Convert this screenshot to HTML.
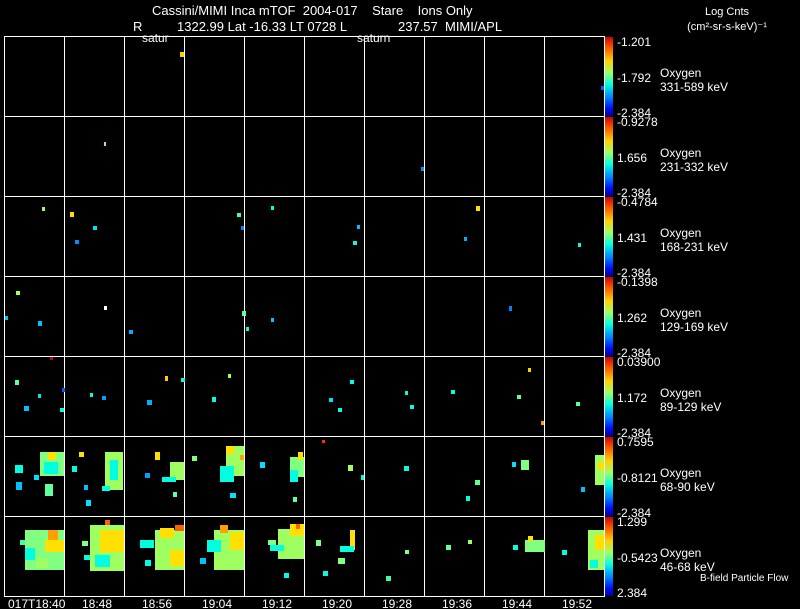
<!DOCTYPE html>
<html><head><meta charset="utf-8"><style>
html,body{margin:0;padding:0;background:#000;width:800px;height:609px;overflow:hidden}
svg{display:block}
text{font-family:"Liberation Sans",sans-serif;fill:#fff;white-space:pre}
</style></head><body>
<svg width="800" height="609" viewBox="0 0 800 609" xmlns="http://www.w3.org/2000/svg" xml:space="preserve">
<defs>
<linearGradient id="cb" x1="0" y1="0" x2="0" y2="1">
<stop offset="0" stop-color="#d00000"/>
<stop offset="0.15" stop-color="#ff6000"/>
<stop offset="0.3" stop-color="#ffd000"/>
<stop offset="0.45" stop-color="#a0ff60"/>
<stop offset="0.6" stop-color="#00ffe0"/>
<stop offset="0.75" stop-color="#0090ff"/>
<stop offset="0.9" stop-color="#0010ff"/>
<stop offset="1" stop-color="#0000a0"/>
</linearGradient>
</defs>
<rect width="800" height="609" fill="#000"/>
<text x="152" y="15" font-size="13">Cassini/MIMI Inca mTOF  2004-017    Stare    Ions Only</text>
<text x="133" y="31" font-size="13">R</text>
<text x="177" y="31" font-size="13">1322.99 Lat -16.33 LT 0728 L</text>
<text x="398" y="31" font-size="13">237.57  MIMI/APL</text>
<text x="142" y="42" font-size="12">satur</text>
<text x="357" y="42" font-size="12">saturn</text>
<text x="727" y="15" font-size="11" text-anchor="middle">Log Cnts</text>
<text x="727" y="30" font-size="11" text-anchor="middle">(cm²-sr-s-keV)⁻¹</text>

<g fill="url(#cb)">
<rect x="605" y="37" width="8" height="79"/><rect x="605" y="117" width="8" height="79"/><rect x="605" y="197" width="8" height="79"/><rect x="605" y="277" width="8" height="79"/><rect x="605" y="357" width="8" height="79"/><rect x="605" y="437" width="8" height="79"/><rect x="605" y="517" width="8" height="79"/>
</g>

<g stroke="#fff" stroke-width="1" fill="none">
<rect x="4.5" y="36.5" width="600" height="560"/>
<path d="M4 116.5H605M4 196.5H605M4 276.5H605M4 356.5H605M4 436.5H605M4 516.5H605"/>
<path d="M64.5 36V596M124.5 36V596M184.5 36V596M244.5 36V596M304.5 36V596M364.5 36V596M424.5 36V596M484.5 36V596M544.5 36V596"/>
</g>

<g font-size="12">
<text x="617" y="46">-1.201</text><text x="617" y="82">-1.792</text><text x="617" y="117">-2.384</text>
<text x="617" y="126">-0.9278</text><text x="617" y="162">1.656</text><text x="617" y="197">-2.384</text>
<text x="617" y="206">-0.4784</text><text x="617" y="242">1.431</text><text x="617" y="277">-2.384</text>
<text x="617" y="286">-0.1398</text><text x="617" y="322">1.262</text><text x="617" y="357">-2.384</text>
<text x="617" y="366">0.03900</text><text x="617" y="402">1.172</text><text x="617" y="437">-2.384</text>
<text x="617" y="446">0.7595</text><text x="617" y="482">-0.8121</text><text x="617" y="517">-2.384</text>
<text x="617" y="526">1.299</text><text x="617" y="562">-0.5423</text><text x="617" y="597">2.384</text>
</g>
<g font-size="12">
<text x="660" y="77">Oxygen</text><text x="660" y="91">331-589 keV</text>
<text x="660" y="157">Oxygen</text><text x="660" y="171">231-332 keV</text>
<text x="660" y="237">Oxygen</text><text x="660" y="251">168-231 keV</text>
<text x="660" y="317">Oxygen</text><text x="660" y="331">129-169 keV</text>
<text x="660" y="397">Oxygen</text><text x="660" y="411">89-129 keV</text>
<text x="660" y="477">Oxygen</text><text x="660" y="491">68-90 keV</text>
<text x="660" y="557">Oxygen</text><text x="660" y="571">46-68 keV</text>
</g>
<text x="700" y="581" font-size="10">B-field Particle Flow</text>
<g font-size="12">
<text x="8" y="608">017T18:40</text><text x="82" y="608">18:48</text><text x="142" y="608">18:56</text><text x="202" y="608">19:04</text><text x="262" y="608">19:12</text><text x="322" y="608">19:20</text><text x="382" y="608">19:28</text><text x="442" y="608">19:36</text><text x="502" y="608">19:44</text><text x="562" y="608">19:52</text>
</g>

<g>
<rect x="180" y="52" width="4" height="5" fill="#ffd000"/><rect x="601" y="86" width="3" height="4" fill="#0060ff"/>
<rect x="104" y="142" width="2" height="4" fill="#80ff80"/><rect x="421" y="167" width="3" height="4" fill="#0090ff"/>
<rect x="42" y="207" width="3" height="4" fill="#a0ff60"/><rect x="70" y="212" width="4" height="5" fill="#ffe000"/><rect x="93" y="226" width="4" height="4" fill="#00e0ff"/><rect x="75" y="240" width="4" height="4" fill="#0090ff"/><rect x="237" y="213" width="4" height="4" fill="#40ffa0"/><rect x="241" y="226" width="3" height="4" fill="#0080ff"/><rect x="271" y="206" width="3" height="4" fill="#00ffe0"/><rect x="357" y="225" width="3" height="4" fill="#00c0ff"/><rect x="353" y="241" width="4" height="4" fill="#00ffe0"/><rect x="476" y="206" width="4" height="5" fill="#ffe000"/><rect x="464" y="237" width="3" height="4" fill="#00b0ff"/><rect x="578" y="243" width="3" height="4" fill="#00ffe0"/>
<rect x="16" y="291" width="4" height="4" fill="#a0ff60"/><rect x="5" y="316" width="3" height="4" fill="#00c0ff"/><rect x="38" y="321" width="4" height="5" fill="#00c0ff"/><rect x="104" y="306" width="3" height="4" fill="#ffffff"/><rect x="129" y="330" width="4" height="4" fill="#00b0ff"/><rect x="242" y="311" width="4" height="5" fill="#60ffa0"/><rect x="246" y="327" width="3" height="4" fill="#00ffe0"/><rect x="271" y="318" width="3" height="4" fill="#00c0ff"/><rect x="509" y="306" width="3" height="5" fill="#0080ff"/>
<rect x="15" y="380" width="4" height="5" fill="#60ffa0"/><rect x="24" y="406" width="5" height="5" fill="#00c0ff"/><rect x="38" y="394" width="3" height="4" fill="#00e0ff"/><rect x="62" y="388" width="3" height="4" fill="#0060ff"/><rect x="60" y="408" width="4" height="4" fill="#00ffe0"/><rect x="90" y="393" width="3" height="4" fill="#00ffe0"/><rect x="102" y="396" width="4" height="4" fill="#00a0ff"/><rect x="147" y="400" width="5" height="5" fill="#00b0ff"/><rect x="165" y="376" width="3" height="5" fill="#ffd000"/><rect x="181" y="378" width="4" height="4" fill="#00ffe0"/><rect x="212" y="397" width="4" height="5" fill="#00ffe0"/><rect x="228" y="374" width="3" height="4" fill="#a0ff60"/><rect x="329" y="398" width="4" height="4" fill="#00e0ff"/><rect x="338" y="408" width="4" height="4" fill="#00ffe0"/><rect x="350" y="380" width="4" height="4" fill="#00ffe0"/><rect x="405" y="391" width="3" height="4" fill="#00ffe0"/><rect x="410" y="405" width="4" height="4" fill="#00ffe0"/><rect x="451" y="390" width="4" height="4" fill="#00ffe0"/><rect x="517" y="395" width="4" height="4" fill="#60ffa0"/><rect x="528" y="368" width="3" height="4" fill="#ffd000"/><rect x="576" y="402" width="4" height="4" fill="#60ffa0"/><rect x="541" y="421" width="3" height="4" fill="#ffa000"/><rect x="50" y="357" width="3" height="3" fill="#d00000"/>
</g>
<g>
<rect x="40" y="452" width="24" height="24" fill="#80ff80"/><rect x="48" y="452" width="8" height="8" fill="#ffe000"/><rect x="44" y="462" width="14" height="12" fill="#00ffe0"/><rect x="15" y="465" width="8" height="8" fill="#00ffe0"/><rect x="16" y="482" width="6" height="8" fill="#00c0ff"/><rect x="34" y="475" width="5" height="5" fill="#00e0ff"/><rect x="45" y="484" width="8" height="12" fill="#60ffa0"/>
<rect x="105" y="452" width="18" height="38" fill="#a0ff60"/><rect x="110" y="460" width="8" height="20" fill="#00ffe0"/><rect x="79" y="452" width="5" height="5" fill="#ffe000"/><rect x="72" y="466" width="5" height="6" fill="#00ffe0"/><rect x="84" y="485" width="4" height="5" fill="#00c0ff"/><rect x="86" y="500" width="5" height="6" fill="#00e0ff"/><rect x="102" y="486" width="8" height="5" fill="#00ffe0"/>
<rect x="155" y="452" width="5" height="8" fill="#ffe000"/><rect x="170" y="462" width="14" height="18" fill="#a0ff60"/><rect x="162" y="477" width="14" height="5" fill="#00ffe0"/><rect x="145" y="473" width="5" height="5" fill="#00a0ff"/><rect x="173" y="492" width="4" height="5" fill="#60ffa0"/>
<rect x="226" y="446" width="18" height="30" fill="#a0ff60"/><rect x="226" y="446" width="8" height="8" fill="#ffe000"/><rect x="220" y="466" width="14" height="16" fill="#00ffe0"/><rect x="240" y="455" width="4" height="5" fill="#ffa000"/><rect x="192" y="456" width="5" height="5" fill="#80ff80"/><rect x="230" y="493" width="6" height="5" fill="#00e0ff"/>
<rect x="290" y="457" width="14" height="20" fill="#80ff80"/><rect x="298" y="452" width="5" height="8" fill="#ffe000"/><rect x="290" y="470" width="8" height="12" fill="#00ffe0"/><rect x="260" y="462" width="5" height="6" fill="#00e0ff"/><rect x="293" y="497" width="4" height="5" fill="#60ffa0"/>
<rect x="348" y="465" width="5" height="6" fill="#a0ff60"/><rect x="322" y="440" width="3" height="3" fill="#ff3000"/><rect x="361" y="475" width="3" height="5" fill="#00ffe0"/><rect x="404" y="466" width="5" height="5" fill="#00ffe0"/><rect x="475" y="480" width="5" height="5" fill="#60ffa0"/><rect x="466" y="496" width="4" height="5" fill="#00ffe0"/><rect x="521" y="460" width="8" height="10" fill="#80ff80"/><rect x="512" y="462" width="4" height="5" fill="#00e0ff"/><rect x="595" y="455" width="9" height="30" fill="#a0ff60"/><rect x="598" y="462" width="6" height="8" fill="#ffe000"/><rect x="581" y="487" width="4" height="5" fill="#00c0ff"/>
</g>
<g>
<rect x="25" y="530" width="39" height="40" fill="#80ff80"/><rect x="48" y="530" width="10" height="14" fill="#ffa000"/><rect x="45" y="540" width="19" height="12" fill="#ffe000"/><rect x="25" y="548" width="10" height="12" fill="#00ffe0"/><rect x="36" y="558" width="12" height="10" fill="#a0ff60"/><rect x="20" y="540" width="5" height="5" fill="#40ffa0"/>
<rect x="90" y="525" width="34" height="46" fill="#a0ff60"/><rect x="105" y="520" width="5" height="5" fill="#ff6000"/><rect x="100" y="530" width="24" height="22" fill="#ffe000"/><rect x="95" y="555" width="15" height="12" fill="#00ffe0"/><rect x="84" y="555" width="6" height="5" fill="#00ffe0"/><rect x="82" y="541" width="6" height="5" fill="#80ff80"/>
<rect x="155" y="530" width="29" height="40" fill="#a0ff60"/><rect x="175" y="525" width="9" height="6" fill="#ff6000"/><rect x="160" y="528" width="14" height="10" fill="#ffe000"/><rect x="140" y="540" width="14" height="8" fill="#00ffe0"/><rect x="170" y="550" width="14" height="16" fill="#ffe000"/><rect x="145" y="560" width="6" height="6" fill="#00ffe0"/>
<rect x="214" y="530" width="30" height="40" fill="#a0ff60"/><rect x="220" y="525" width="8" height="8" fill="#ffa000"/><rect x="230" y="532" width="14" height="18" fill="#ffe000"/><rect x="207" y="540" width="14" height="12" fill="#00ffe0"/><rect x="200" y="558" width="6" height="6" fill="#00c0ff"/>
<rect x="278" y="529" width="26" height="30" fill="#a0ff60"/><rect x="290" y="524" width="14" height="12" fill="#ffe000"/><rect x="296" y="524" width="4" height="5" fill="#ff6000"/><rect x="270" y="545" width="14" height="6" fill="#00ffe0"/><rect x="268" y="540" width="8" height="5" fill="#80ff80"/><rect x="284" y="573" width="5" height="5" fill="#00ffe0"/>
<rect x="350" y="530" width="5" height="20" fill="#ffe000"/><rect x="340" y="546" width="14" height="6" fill="#00ffe0"/><rect x="338" y="558" width="7" height="6" fill="#80ff80"/><rect x="316" y="540" width="5" height="6" fill="#80ff80"/><rect x="323" y="571" width="5" height="5" fill="#00ffe0"/><rect x="386" y="576" width="5" height="5" fill="#40ffa0"/><rect x="405" y="550" width="4" height="4" fill="#80ff80"/>
<rect x="446" y="545" width="5" height="5" fill="#60ffa0"/><rect x="468" y="540" width="4" height="4" fill="#a0ff60"/>
<rect x="525" y="540" width="20" height="12" fill="#80ff80"/><rect x="528" y="536" width="5" height="5" fill="#ffe000"/><rect x="513" y="545" width="5" height="5" fill="#00ffe0"/><rect x="562" y="550" width="5" height="5" fill="#00ffe0"/>
<rect x="588" y="530" width="16" height="40" fill="#a0ff60"/><rect x="595" y="535" width="9" height="15" fill="#ffe000"/><rect x="590" y="560" width="8" height="8" fill="#00ffe0"/>
</g>
</svg>
</body></html>
